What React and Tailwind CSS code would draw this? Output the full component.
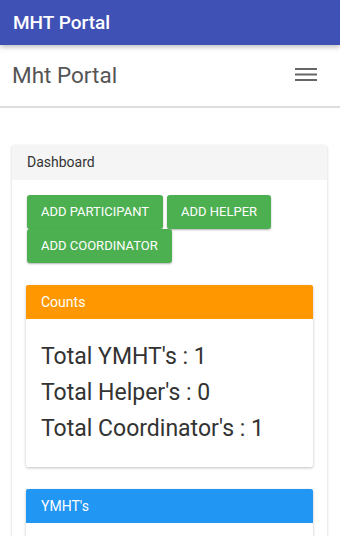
export default function App() {
  return (
    <div className="w-[340px] h-[536px] overflow-hidden bg-white font-['Roboto',sans-serif] text-[#333]">
      <div className="relative z-10 h-[45px] bg-[#3f51b5] pl-[13px] pt-[9px] shadow-[0_2px_5px_rgba(0,0,0,0.26)]">
        <div className="text-[19px] font-medium leading-normal text-white">MHT Portal</div>
      </div>
      <div className="flex h-[63px] items-center justify-between border-b-2 border-[#dddddd] bg-white pl-[12px] pr-[23px]">
        <div className="text-[22.5px] leading-normal text-[#555]">Mht Portal</div>
        <svg width="22" height="14" viewBox="0 0 22 14" className="mt-[-1px]">
          <rect x="0" y="0" width="22" height="2" fill="#666" />
          <rect x="0" y="5.5" width="22" height="2" fill="#666" />
          <rect x="0" y="11" width="22" height="2" fill="#666" />
        </svg>
      </div>
      <div className="ml-[12px] mt-[37px] w-[315px] rounded-[2px] bg-white shadow-[0_1px_3px_rgba(0,0,0,0.2)]">
        <div className="flex h-[35px] items-center rounded-t-[2px] bg-[#f5f5f5] px-[15px] text-[14px]">Dashboard</div>
        <div className="px-[15px] pt-[15px]">
          <div className="flex flex-wrap gap-x-[4px]">
            <button className="h-[34px] rounded-[3px] bg-[#4caf50] px-[14px] text-[13px] text-white shadow-[0_1px_2px_rgba(0,0,0,0.3)]">ADD PARTICIPANT</button>
            <button className="h-[34px] rounded-[3px] bg-[#4caf50] px-[14px] text-[13px] text-white shadow-[0_1px_2px_rgba(0,0,0,0.3)]">ADD HELPER</button>
            <button className="h-[34px] rounded-[3px] bg-[#4caf50] px-[14px] text-[13px] text-white shadow-[0_1px_2px_rgba(0,0,0,0.3)]">ADD COORDINATOR</button>
          </div>
          <div className="-mx-px mt-[22px] rounded-[2px] bg-white shadow-[0_1px_3px_rgba(0,0,0,0.25)]">
            <div className="flex h-[34px] items-center rounded-t-[2px] bg-[#ff9800] px-[15px] text-[14px] text-white">Counts</div>
            <div className="px-[15px] pb-[20px] pt-[20px] text-[23px] leading-[36px] text-[#333]">
              <div>Total YMHT's : 1</div>
              <div>Total Helper's : 0</div>
              <div>Total Coordinator's : 1</div>
            </div>
          </div>
          <div className="-mx-px mt-[22px] rounded-[2px] bg-white shadow-[0_1px_3px_rgba(0,0,0,0.25)]">
            <div className="flex h-[34px] items-center rounded-t-[2px] bg-[#2196f3] px-[15px] text-[14px] text-white">YMHT's</div>
            <div className="h-[60px]"></div>
          </div>
        </div>
      </div>
    </div>
  );
}
